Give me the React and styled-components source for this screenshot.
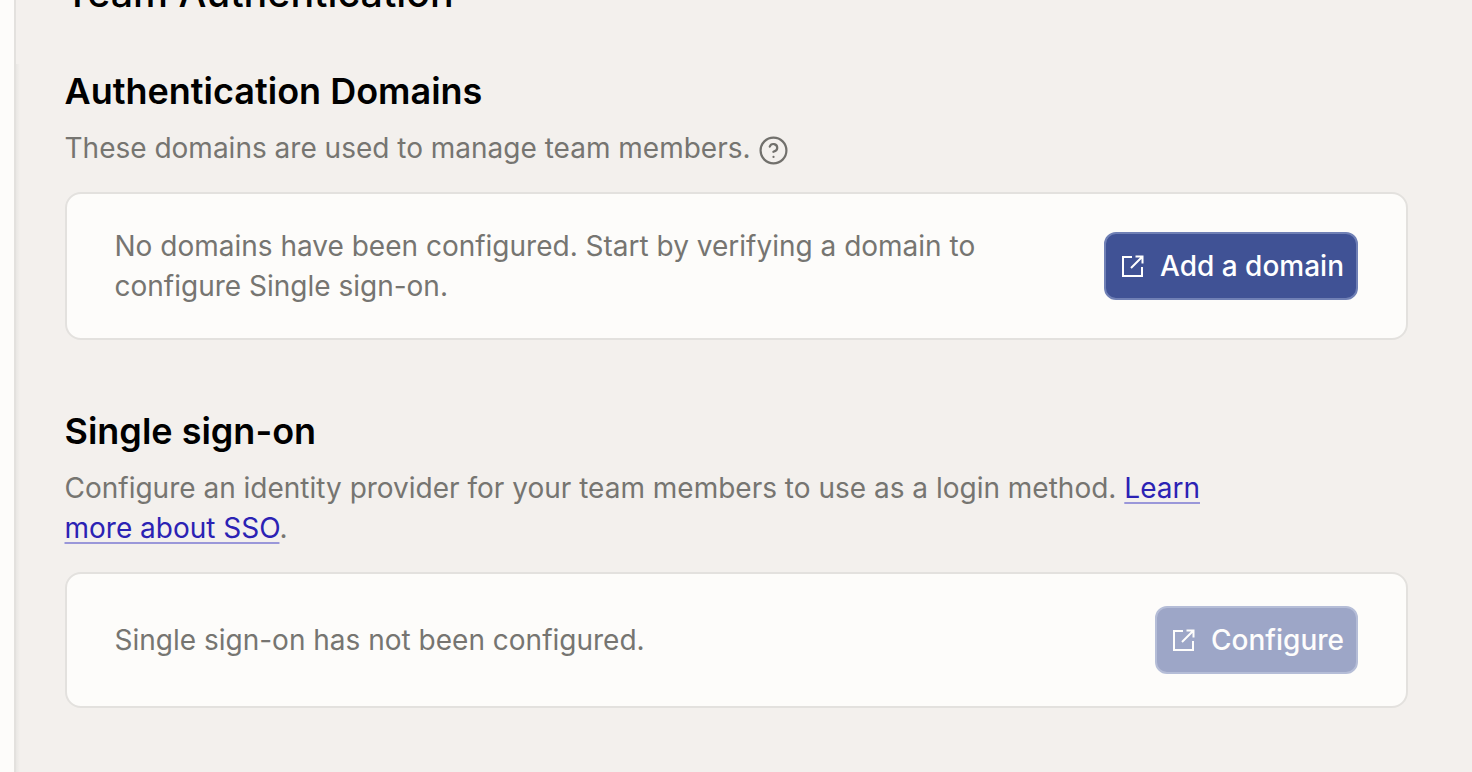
import React from "react";
import styled, { createGlobalStyle } from "styled-components";
import { CircleHelp } from "lucide-react";

const Global = createGlobalStyle`
  html, body { margin: 0; padding: 0; height: 100%; overflow: hidden; background: #fdfcfa; }
  #root { height: 100%; }
  * { box-sizing: border-box; }
`;

const Page = styled.div`
  display: flex;
  height: 772px;
  overflow: hidden;
  font-family: Inter, "Liberation Sans", sans-serif;
`;

const Rail = styled.div`
  flex: 0 0 14px;
  background: #fdfcfa;
`;

const Main = styled.main`
  flex: 1;
  position: relative;
  background: #f3f0ed;
  border-left: 2px solid #e3e1de;
  padding: 0 64px 0 48.5px;
  overflow: hidden;
  &::before {
    content: "";
    position: absolute;
    left: 0;
    top: 64px;
    bottom: 0;
    width: 4px;
    background: linear-gradient(to right, #e9e7e4, #f3f0ed);
  }
`;

const PageTitle = styled.h1`
  margin: -31px 0 0;
  font-size: 39.4px;
  line-height: 48px;
  font-weight: 500;
  color: #000;
`;

const Section = styled.section`
  margin-top: ${(p) => p.$top}px;
`;

const Heading = styled.h2`
  margin: 0;
  font-size: 36px;
  line-height: 44px;
  font-weight: 600;
  color: #000;
`;

const Description = styled.p`
  margin: 15px 0 0;
  max-width: 1200px;
  font-size: 28px;
  line-height: 40px;
  color: #767571;
`;

const HelpIcon = styled(CircleHelp)`
  display: inline-block;
  vertical-align: -8px;
  margin-left: 7px;
`;

const Link = styled.a`
  color: #2b22b4;
  text-decoration: underline;
  text-decoration-color: #9a97d9;
  text-decoration-thickness: 2px;
  text-underline-offset: 4px;
`;

const Card = styled.div`
  display: flex;
  align-items: center;
  justify-content: space-between;
  margin-top: 24px;
  padding: 32px 48px;
  background: #fdfcfa;
  border: 2px solid #e3e1de;
  border-radius: 16px;
`;

const CardText = styled.p`
  margin: 0;
  max-width: 880px;
  font-size: 28px;
  line-height: 40px;
  color: #767571;
`;

const Button = styled.button`
  display: flex;
  align-items: center;
  gap: 16px;
  height: 68px;
  padding: 0 12px 0 16px;
  font-family: inherit;
  font-size: 28px;
  font-weight: 500;
  color: #fff;
  background: #405295;
  border: 2px solid #7080b5;
  border-radius: 12px;
  opacity: ${(p) => (p.disabled ? 0.5 : 1)};
`;

const ExternalIcon = () => (
  <svg width="22" height="22" viewBox="0 0 22 22" fill="none" stroke="currentColor" strokeWidth="2">
    <path d="M10 2H1v19h19v-9" />
    <path d="M9 13L20 2M13.5 1.5H20.500V8.500" />
  </svg>
);

export default function App() {
  return (
    <Page>
      <Global />
      <Rail />
      <Main>
        <PageTitle>Team Authentication</PageTitle>
        <Section $top={52}>
          <Heading>Authentication Domains</Heading>
          <Description>
            These domains are used to manage team members.
            <HelpIcon size={31} strokeWidth={1.7} color="#71706c" />
          </Description>
          <Card>
            <CardText>
              No domains have been configured. Start by verifying a domain to configure Single sign-on.
            </CardText>
            <Button>
              <ExternalIcon />
              Add a domain
            </Button>
          </Card>
        </Section>
        <Section $top={69}>
          <Heading>Single sign-on</Heading>
          <Description>
            Configure an identity provider for your team members to use as a login method.{" "}
            <Link href="#">Learn more about SSO</Link>.
          </Description>
          <Card>
            <CardText>Single sign-on has not been configured.</CardText>
            <Button disabled>
              <ExternalIcon />
              Configure
            </Button>
          </Card>
        </Section>
      </Main>
    </Page>
  );
}
